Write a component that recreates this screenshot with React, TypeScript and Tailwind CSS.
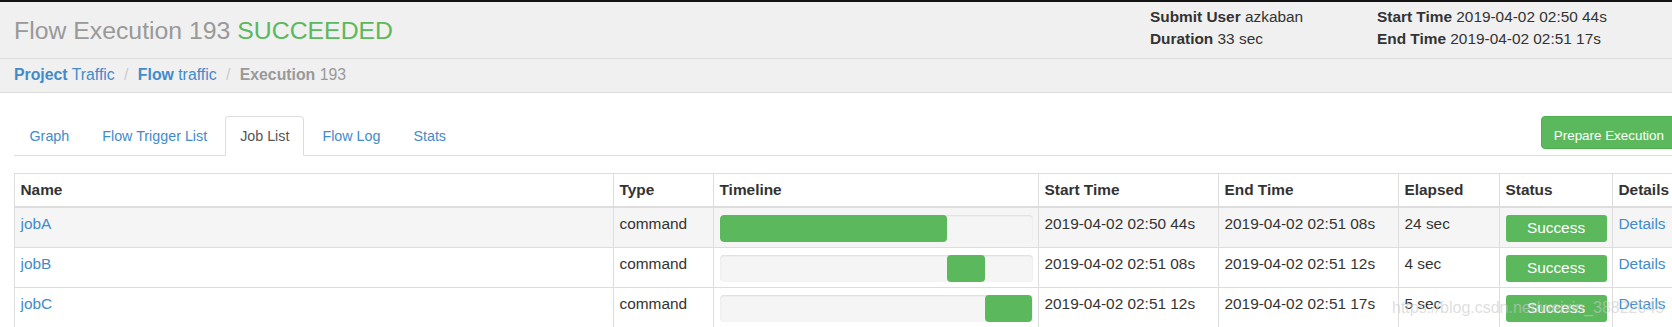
import React from 'react'

interface Job {
  name: string
  type: string
  start: string
  end: string
  startSec: number
  endSec: number
  elapsed: string
}

const FLOW_SECS = 33

const jobs: Job[] = [
  { name: 'jobA', type: 'command', start: '2019-04-02 02:50 44s', end: '2019-04-02 02:51 08s', startSec: 0, endSec: 24, elapsed: '24 sec' },
  { name: 'jobB', type: 'command', start: '2019-04-02 02:51 08s', end: '2019-04-02 02:51 12s', startSec: 24, endSec: 28, elapsed: '4 sec' },
  { name: 'jobC', type: 'command', start: '2019-04-02 02:51 12s', end: '2019-04-02 02:51 17s', startSec: 28, endSec: 33, elapsed: '5 sec' },
]

const tabs = ['Graph', 'Flow Trigger List', 'Job List', 'Flow Log', 'Stats']
const columns = ['Name', 'Type', 'Timeline', 'Start Time', 'End Time', 'Elapsed', 'Status', 'Details']

export default function App() {
  return (
    <div className="relative w-[1672px] h-[327px] overflow-hidden bg-white text-[#333] font-['Liberation_Sans',Arial,sans-serif]">
      <div className="w-[1700px]">
        <div className="h-[2px] bg-[#141414]" />

        {/* Title header */}
        <div className="flex h-[57px] border-b border-[#ddd] bg-[#f0f0f0] px-[14px]">
          <h1 className="flex-1 pt-[17px] text-[24.8px] leading-[24px] text-[#999] font-normal">
            Flow Execution 193 <span className="text-[#5cb85c]">SUCCEEDED</span>
          </h1>
          <div className="flex pt-[4px] text-[15.4px] leading-[22.3px]">
            <div className="w-[227px]">
              <p><b>Submit User</b> azkaban</p>
              <p><b>Duration</b> 33 sec</p>
            </div>
            <div className="w-[309px]">
              <p><b>Start Time</b> 2019-04-02 02:50 44s</p>
              <p><b>End Time</b> 2019-04-02 02:51 17s</p>
            </div>
          </div>
        </div>

        {/* Breadcrumb */}
        <div className="h-[34px] border-b border-[#ddd] bg-[#f0f0f0] px-[14px] pt-[4.5px] text-[15.8px] leading-[22px] whitespace-pre">
          <span className="text-[#428bca]"><b>Project</b> Traffic</span>
          <span className="text-[#ccc]">{' '}<span className="px-[5px]">/{'\u00a0'}</span></span>
          <span className="text-[#428bca]"><b>Flow</b> traffic</span>
          <span className="text-[#ccc]">{' '}<span className="px-[5px]">/{'\u00a0'}</span></span>
          <span className="text-[#999]"><b>Execution</b> 193</span>
        </div>

        {/* Tabs */}
        <div className="mt-[23px] px-[14px]">
          <div className="flex items-start border-b border-[#ddd]">
            <ul className="ml-[0.5px] flex -mb-px">
              {tabs.map(t => {
                const active = t === 'Job List'
                return (
                  <li key={t}
                    className={`mr-[3px] border rounded-t-[4px] px-[14px] pt-[11px] pb-[11px] text-[14.3px] leading-[16px] ${
                      active ? 'border-[#ddd] border-b-white bg-white text-[#555]' : 'border-transparent text-[#428bca]'
                    }`}>
                    {t}
                  </li>
                )
              })}
            </ul>
            <button className="ml-auto mr-[9px] h-[33px] rounded-[4px] border border-[#4cae4c] bg-[#5cb85c] px-[12px] pt-[5px] text-[13.4px] leading-[19px] text-white self-start">
              Prepare Execution
            </button>
          </div>

          {/* Job table */}
          <div className="mt-[17px] border-t border-[#ddd]">
            <div className="grid grid-cols-[599px_100px_325px_180px_180px_101px_113px_74px] text-[15.4px]">
              {columns.map((c, i) => (
                <div key={c}
                  className={`h-[34px] border-l border-b-2 border-[#ddd] px-[5.5px] pt-[5px] leading-[21px] font-bold ${i === columns.length - 1 ? 'border-r' : ''}`}>
                  {c}
                </div>
              ))}

              {jobs.map((j, r) => {
                const bg = r === 0 ? 'bg-[#f5f5f5]' : 'bg-white'
                const cell = `h-[40px] border-l border-b border-[#ddd] px-[5.5px] pt-[5.5px] leading-[20px] ${bg}`
                const left = (j.startSec / FLOW_SECS) * 100
                const width = ((j.endSec - j.startSec) / FLOW_SECS) * 100
                return (
                  <React.Fragment key={j.name}>
                    <div className={cell}><span className="text-[#428bca]">{j.name}</span></div>
                    <div className={cell}>{j.type}</div>
                    <div className={cell}>
                      <div className="mt-[1.5px] flex h-[26.5px] overflow-hidden rounded-[4px] bg-[#f5f5f5] shadow-[inset_0_1px_2px_rgba(0,0,0,0.1)]">
                        <div className="h-full rounded-[4px] bg-[#5cb85c]"
                          style={{ marginLeft: `${left}%`, width: `${width}%` }} />
                      </div>
                    </div>
                    <div className={cell}>{j.start}</div>
                    <div className={cell}>{j.end}</div>
                    <div className={cell}>{j.elapsed}</div>
                    <div className={cell}>
                      <div className="mt-[1.5px] flex h-[26.5px] items-center justify-center rounded-[3px] bg-[#5cb85c] text-white">
                        Success
                      </div>
                    </div>
                    <div className={`${cell} border-r`}><span className="text-[#428bca]">Details</span></div>
                  </React.Fragment>
                )
              })}
            </div>
          </div>
        </div>
      </div>

      {/* csdn watermark */}
      <div className="absolute left-[1392px] top-[299px] text-[16px] leading-[18px] text-[#c8c8c8]/60 pointer-events-none">
        https://blog.csdn.net/weixin_38822045
      </div>
    </div>
  )
}
